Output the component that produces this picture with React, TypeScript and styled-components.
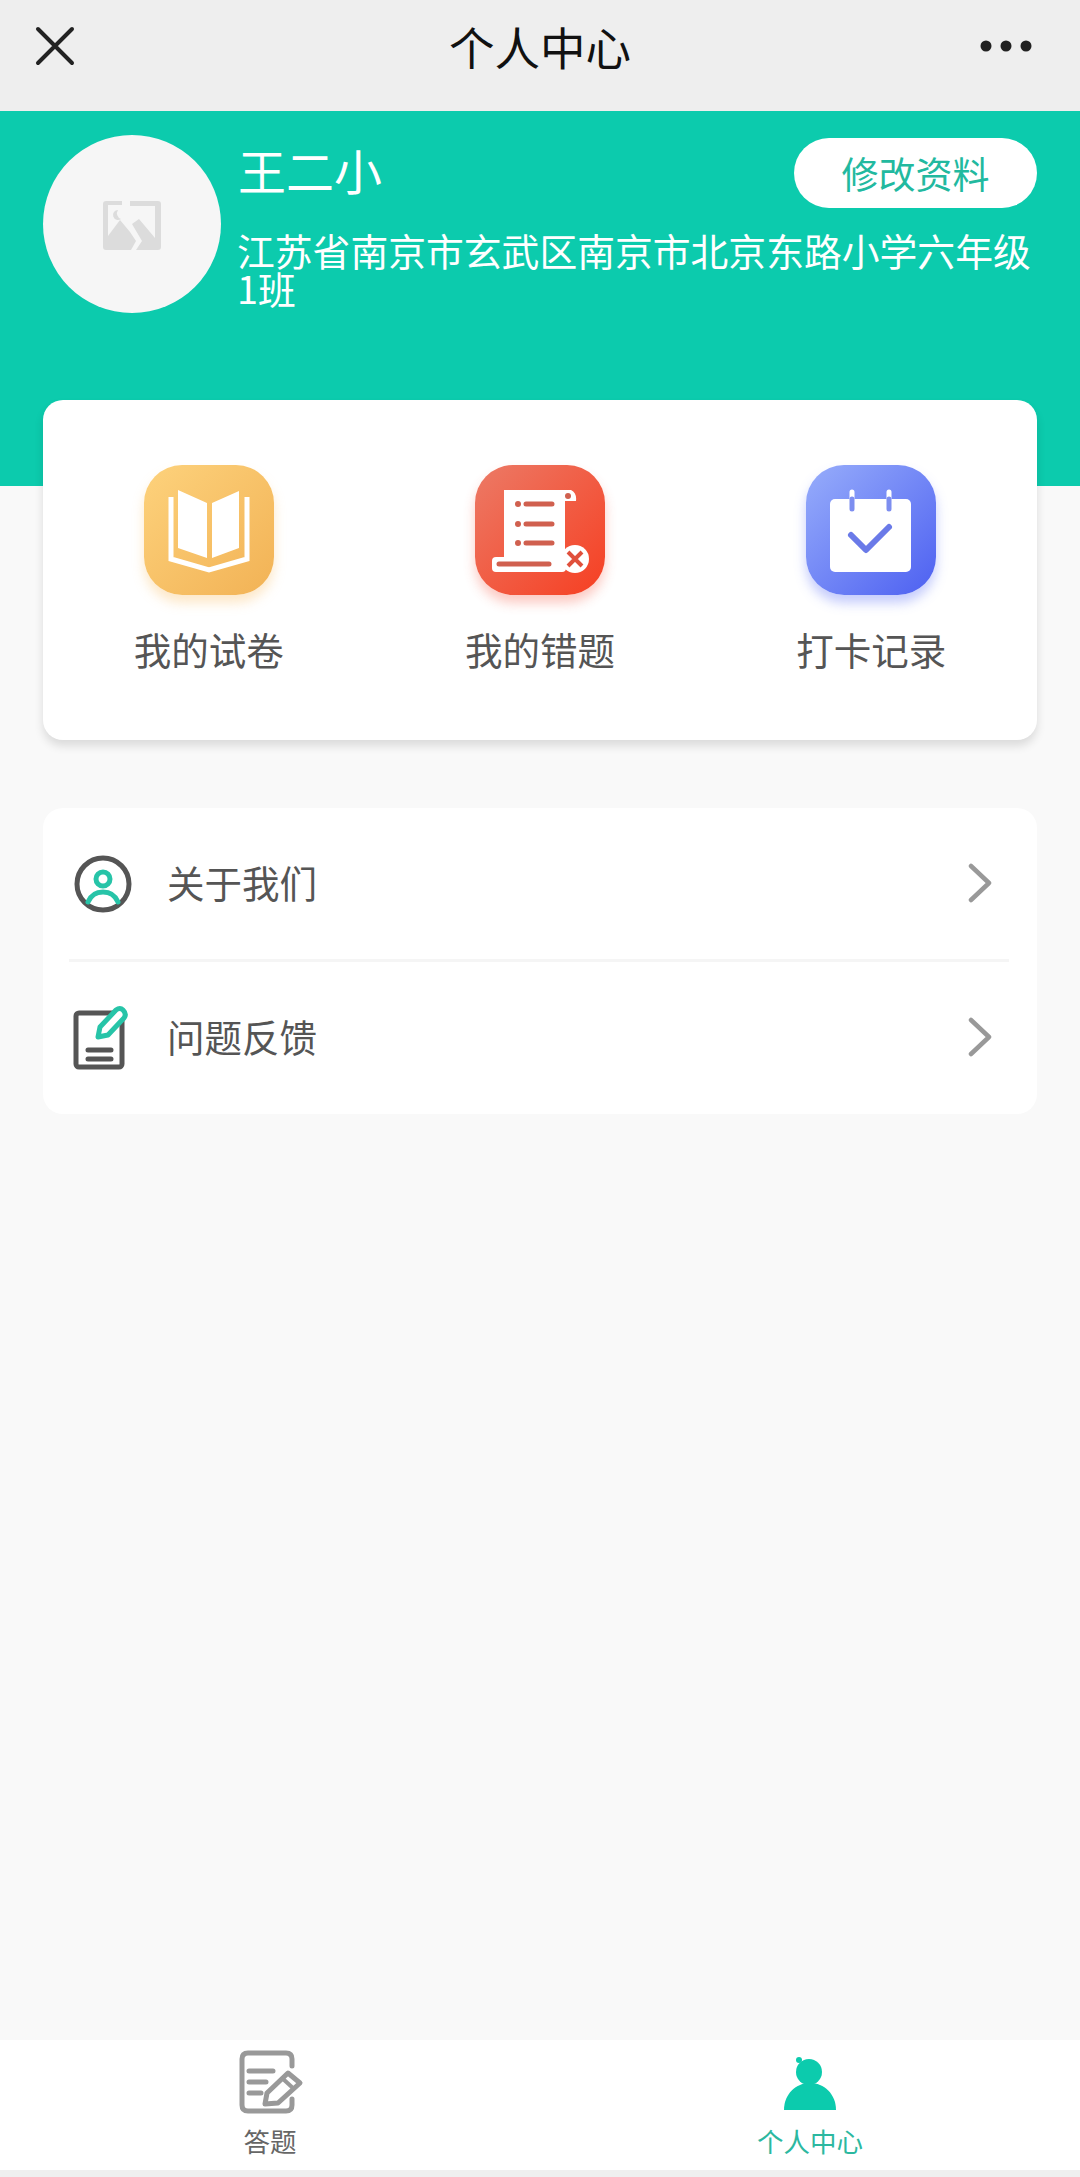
import React from "react";
import styled, { createGlobalStyle } from "styled-components";

const TEAL = "#0ccbad";

const GlobalStyle = createGlobalStyle`
  html, body {
    margin: 0;
    padding: 0;
    background: #f9f9f9;
  }
  * {
    box-sizing: border-box;
  }
`;

const Page = styled.div`
  width: 1080px;
  height: 2177px;
  display: flex;
  flex-direction: column;
  background: #f9f9f9;
  font-family: "Noto Sans CJK SC", "Noto Sans", sans-serif;
  overflow: hidden;
`;

const NavBar = styled.div`
  height: 111px;
  flex: none;
  padding: 0 31px 19px;
  display: grid;
  grid-template-columns: 1fr auto 1fr;
  align-items: center;
  background: #eeeeee;
`;

const NavTitle = styled.div`
  margin-top: -1px;
  font-size: 45.5px;
  line-height: 60px;
  color: #111;
`;

const NavEnd = styled.div`
  padding-right: 17px;
  display: flex;
  justify-content: flex-end;
`;

const Header = styled.div`
  height: 375px;
  flex: none;
  padding: 24px 43px 0;
  display: flex;
  align-items: flex-start;
  gap: 16px;
  background: ${TEAL};
`;

const Avatar = styled.div`
  width: 178px;
  height: 178px;
  flex: none;
  padding-top: 3px;
  border-radius: 50%;
  display: flex;
  align-items: center;
  justify-content: center;
  background: #f6f6f6;
`;

const Info = styled.div`
  flex: 1;
  min-width: 0;
  padding-top: 3px;
`;

const InfoTop = styled.div`
  display: flex;
  align-items: flex-start;
  justify-content: space-between;
  height: 70px;
`;

const Name = styled.div`
  margin-left: 1px;
  font-size: 48px;
  line-height: 63px;
  color: #fff;
`;

const EditButton = styled.button`
  width: 243px;
  height: 70px;
  padding: 0;
  border: none;
  border-radius: 35px;
  background: #fff;
  color: #22b99f;
  font-family: inherit;
  font-size: 37px;
  line-height: 70px;
`;

const Address = styled.div`
  margin-top: 23px;
  font-size: 37.8px;
  line-height: 38px;
  color: #fff;
`;

const ShortcutCard = styled.div`
  margin: -86px 43px 0;
  height: 340px;
  flex: none;
  padding-top: 65px;
  display: grid;
  grid-template-columns: repeat(3, 1fr);
  background: #fff;
  border-radius: 20px;
  box-shadow: 0 6px 10px rgba(0, 0, 0, 0.12);
  position: relative;
`;

const Shortcut = styled.div`
  display: flex;
  flex-direction: column;
  align-items: center;
`;

const ShortcutIcon = styled.div<{ $from: string; $to: string; $glow: string }>`
  width: 130px;
  height: 130px;
  border-radius: 38px;
  background: linear-gradient(135deg, ${(p) => p.$from}, ${(p) => p.$to});
  box-shadow: 0 8px 12px ${(p) => p.$glow};
  svg {
    display: block;
  }
`;

const ShortcutLabel = styled.div`
  margin-top: 32px;
  font-size: 37.5px;
  line-height: 44px;
  color: #555;
`;

const MenuCard = styled.div`
  margin: 68px 43px 0;
  flex: none;
  padding: 0 28px 0 26px;
  background: #fff;
  border-radius: 20px;
`;

const MenuRow = styled.div<{ $divider?: boolean }>`
  height: ${(p) => (p.$divider ? 154 : 152)}px;
  padding-bottom: ${(p) => (p.$divider ? 1 : 2)}px;
  display: flex;
  align-items: center;
  gap: 25px;
  border-bottom: ${(p) => (p.$divider ? "3px solid #f5f5f5" : "none")};
`;

const MenuIcon = styled.div`
  width: 73px;
  height: 70px;
  flex: none;
  padding-left: 4px;
  svg {
    display: block;
  }
`;

const MenuText = styled.div`
  flex: 1;
  margin-top: -2px;
  font-size: 37.5px;
  line-height: 44px;
  color: #555;
`;

const ChevronSlot = styled.div`
  margin-right: 17px;
  display: flex;
`;

const Spacer = styled.div`
  flex: 1;
`;

const TabBar = styled.div`
  height: 137px;
  flex: none;
  display: grid;
  grid-template-columns: 540px 540px;
  background: #fff;
  border-bottom: 7px solid #efefef;
`;

const Tab = styled.div`
  padding-top: 8px;
  display: flex;
  flex-direction: column;
  align-items: center;
`;

const TabLabel = styled.div<{ $active?: boolean }>`
  margin-top: 8px;
  font-size: 26.5px;
  line-height: 30px;
  color: ${(p) => (p.$active ? "#2cb8a0" : "#666")};
`;

const CloseIcon = () => (
  <svg width="44" height="44" viewBox="0 0 44 44" fill="none" stroke="#222" strokeWidth="4" strokeLinecap="round">
    <path d="M7 7 L41 41 M41 7 L7 41" />
  </svg>
);

const DotsIcon = () => (
  <svg width="52" height="14" viewBox="0 0 52 14" fill="#222">
    <circle cx="6" cy="7" r="5.5" />
    <circle cx="26" cy="7" r="5.5" />
    <circle cx="46" cy="7" r="5.5" />
  </svg>
);

const PlaceholderIcon = () => (
  <svg width="58" height="50" viewBox="0 0 58 50" fill="#dcdcdc">
    <path d="M0 3 Q0 0 3 0 H19 V4 H5 V35 L17 19 L27 31 L33 40 L28 49 H3 Q0 49 0 46 Z" />
    <path d="M27 0 H55 Q58 0 58 3 V46 Q58 49 55 49 H33 L39 40 L29 23 L36 18 L52 37 V5 H27 Z" />
    <path d="M15 9 A5 5 0 1 0 18 18 A6 6 0 0 1 15 9 Z" />
  </svg>
);

const BookIcon = () => (
  <svg width="130" height="130" viewBox="0 0 130 130">
    <path d="M34 25 L63 38 V93 L34 83 Z M68 38 L95 26 V83 L68 93 Z" fill="#fff" />
    <path d="M27 32 V94 L65 105 L103 94 V32" fill="none" stroke="#fff" strokeWidth="5" />
  </svg>
);

const ScrollIcon = () => (
  <svg width="130" height="130" viewBox="0 0 130 130">
    <path d="M29 25 H96 Q102 28 101 36 H90 V93 H29 Z" fill="#fff" />
    <rect x="17" y="92" width="74" height="15" rx="4" fill="#fff" />
    <circle cx="100" cy="94" r="14" fill="#fff" />
    <circle cx="93" cy="31" r="3" fill="#d0604f" />
    <g fill="#d0604f">
      <circle cx="43" cy="39" r="3" />
      <circle cx="43" cy="59" r="3" />
      <circle cx="43" cy="78" r="3" />
    </g>
    <path d="M51 39 H77 M51 59 H77 M51 78 H77 M24 99 H74" stroke="#d0604f" strokeWidth="5" strokeLinecap="round" />
    <path d="M93 87 L107 101 M107 87 L93 101" stroke="#e0503c" strokeWidth="4" />
  </svg>
);

const CalendarIcon = () => (
  <svg width="130" height="130" viewBox="0 0 130 130">
    <rect x="24" y="34" width="81" height="73" rx="5" fill="#fff" />
    <path d="M46 27 V34 M83 27 V34" stroke="#fff" strokeWidth="5" strokeLinecap="round" />
    <path d="M46 34 V44 M83 34 V44" stroke="#7d8ef0" strokeWidth="5" strokeLinecap="round" />
    <path d="M45 70 L60 85 L83 62" fill="none" stroke="#6a7ae8" strokeWidth="6" strokeLinecap="round" strokeLinejoin="round" />
  </svg>
);

const UserRingIcon = () => (
  <svg width="60" height="70" viewBox="0 0 60 70" fill="none" strokeWidth="5">
    <circle cx="30" cy="36" r="26" stroke="#555" />
    <circle cx="30" cy="31" r="7" stroke="#27c4a8" />
    <path d="M15 54 C18 47 24 44 30 44 C36 44 42 47 45 54" stroke="#27c4a8" strokeLinecap="round" />
  </svg>
);

const NoteIcon = () => (
  <svg width="60" height="70" viewBox="0 0 60 70" fill="none">
    <rect x="3" y="11" width="46" height="54" rx="3" stroke="#555" strokeWidth="5" />
    <path d="M15 48 H38 M15 57 H38" stroke="#555" strokeWidth="5" strokeLinecap="round" />
    <path d="M25 35 L27 25 L43 8 Q47 5 50 8 Q54 12 51 16 L35 33 Z" fill="#fff" stroke="#27c4a8" strokeWidth="5" strokeLinejoin="round" />
  </svg>
);

const ChevronIcon = () => (
  <svg width="24" height="40" viewBox="0 0 24 40" fill="none" stroke="#999" strokeWidth="4.5" strokeLinecap="round" strokeLinejoin="round">
    <path d="M3 3 L21 20 L3 37" />
  </svg>
);

const AnswerTabIcon = () => (
  <svg width="70" height="70" viewBox="-3 -1 70 70" fill="none" stroke="#999">
    <path d="M54 17 V10 Q54 4 48 4 H10 Q4 4 4 10 V56 Q4 62 10 62 H48 Q54 62 54 56 V50" strokeWidth="5" strokeLinecap="round" />
    <path d="M11 22 H35 M11 33 H28 M11 44 H23" strokeWidth="5" strokeLinecap="round" />
    <path d="M27 55 L29 44 L50 24 L62 34 L40 54 Z" strokeWidth="5" strokeLinejoin="round" fill="#fff" />
    <path d="M44 29 L56 40" strokeWidth="4" />
  </svg>
);

const ProfileTabIcon = () => (
  <svg width="70" height="70" viewBox="0 0 70 70" fill={TEAL}>
    <circle cx="34" cy="24" r="13" />
    <circle cx="24" cy="12" r="3" />
    <path d="M9 62 C9 46 21 35 35 35 C49 35 61 46 61 62 Z" />
  </svg>
);

function App() {
  return (
    <Page>
      <GlobalStyle />
      <NavBar>
        <div>
          <CloseIcon />
        </div>
        <NavTitle>个人中心</NavTitle>
        <NavEnd>
          <DotsIcon />
        </NavEnd>
      </NavBar>

      <Header>
        <Avatar>
          <PlaceholderIcon />
        </Avatar>
        <Info>
          <InfoTop>
            <Name>王二小</Name>
            <EditButton>修改资料</EditButton>
          </InfoTop>
          <Address>江苏省南京市玄武区南京市北京东路小学六年级1班</Address>
        </Info>
      </Header>

      <ShortcutCard>
        <Shortcut>
          <ShortcutIcon $from="#fdd27c" $to="#f2b255" $glow="rgba(248, 190, 100, 0.35)">
            <BookIcon />
          </ShortcutIcon>
          <ShortcutLabel>我的试卷</ShortcutLabel>
        </Shortcut>
        <Shortcut>
          <ShortcutIcon $from="#ec7a66" $to="#f63f22" $glow="rgba(245, 80, 55, 0.3)">
            <ScrollIcon />
          </ShortcutIcon>
          <ShortcutLabel>我的错题</ShortcutLabel>
        </Shortcut>
        <Shortcut>
          <ShortcutIcon $from="#97adfb" $to="#4d60f1" $glow="rgba(90, 110, 245, 0.35)">
            <CalendarIcon />
          </ShortcutIcon>
          <ShortcutLabel>打卡记录</ShortcutLabel>
        </Shortcut>
      </ShortcutCard>

      <MenuCard>
        <MenuRow $divider>
          <MenuIcon>
            <UserRingIcon />
          </MenuIcon>
          <MenuText>关于我们</MenuText>
          <ChevronSlot>
            <ChevronIcon />
          </ChevronSlot>
        </MenuRow>
        <MenuRow>
          <MenuIcon>
            <NoteIcon />
          </MenuIcon>
          <MenuText>问题反馈</MenuText>
          <ChevronSlot>
            <ChevronIcon />
          </ChevronSlot>
        </MenuRow>
      </MenuCard>

      <Spacer />

      <TabBar>
        <Tab>
          <AnswerTabIcon />
          <TabLabel>答题</TabLabel>
        </Tab>
        <Tab>
          <ProfileTabIcon />
          <TabLabel $active>个人中心</TabLabel>
        </Tab>
      </TabBar>
    </Page>
  );
}

export default App;
